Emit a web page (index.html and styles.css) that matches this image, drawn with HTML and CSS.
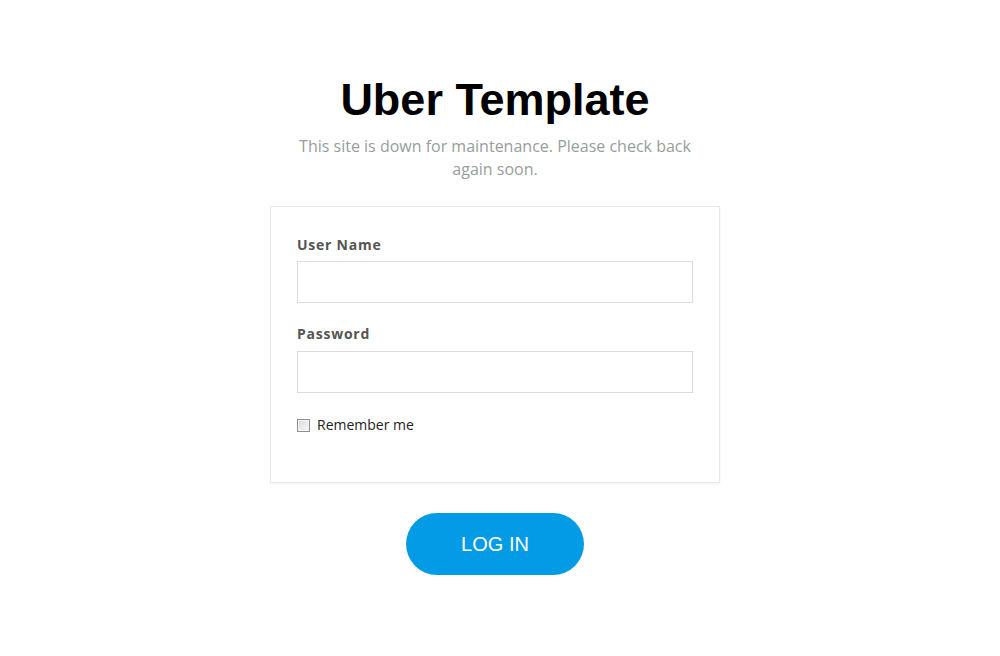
FILE: index.html
```html
<!DOCTYPE html>
<html lang="en">
<head>
    <meta charset="UTF-8">
    <meta name="viewport" content="width=device-width, initial-scale=1.0">
    <title>Uber Template</title>
    <link rel="stylesheet" href="styles.css">
</head>
<body>
    <div class="wrapper">
        <h1>Uber Template</h1>
        <p class="intro">This site is down for maintenance. Please check back again soon.</p>

        <form class="login-form" onsubmit="return false;">
            <div class="login-box">
                <label for="username" class="field-label">User Name</label>
                <input type="text" id="username" class="field-input">

                <label for="password" class="field-label field-label-pass">Password</label>
                <input type="password" id="password" class="field-input">

                <label class="remember">
                    <input type="checkbox" class="remember-check">
                    <span>Remember me</span>
                </label>
            </div>
            <button type="submit" class="login-btn">LOG IN</button>
        </form>
    </div>
</body>
</html>
```

FILE: styles.css
```css
body {
    margin: 0;
    padding: 75px 10px 0 0;
    background-color: #fff;
    font-family: 'Open Sans', sans-serif;
    color: #333;
}
.wrapper {
    width: 450px;
    margin: 0 auto;
    text-align: center;
}
h1 {
    font-family: 'Liberation Sans', Arial, sans-serif;
    font-size: 45px;
    font-weight: 700;
    line-height: 50px;
    color: #000;
    margin: 0 0 10px;
}
.intro {
    width: 410px;
    margin: 0 auto 25px;
    font-size: 16px;
    line-height: 23px;
    color: #979d9d;
}
.login-box {
    text-align: left;
    border: 1px solid #e8e8e8;
    box-shadow: 0 1px 2px rgba(0,0,0,0.06);
    padding: 28px 26px 47px;
}
.field-label {
    display: block;
    font-size: 14px;
    font-weight: 700;
    line-height: 20px;
    color: #555;
    letter-spacing: 0.75px;
    margin-bottom: 6px;
}
.field-label-pass {
    margin-bottom: 7px;
}
.field-input {
    display: block;
    box-sizing: border-box;
    width: 100%;
    height: 42px;
    margin: 0 0 21px;
    border: 1px solid #dcdcdc;
    padding: 0 10px;
    font-family: 'Open Sans', sans-serif;
    font-size: 14px;
    outline: none;
}
.remember {
    display: flex;
    align-items: center;
    font-size: 14px;
    line-height: 20px;
    color: #222;
    margin-top: 22px;
}
.remember-check {
    appearance: none;
    -webkit-appearance: none;
    box-sizing: border-box;
    width: 13px;
    height: 13px;
    margin: 0 7px 0 0;
    border: 1px solid #8e8f8f;
    background: linear-gradient(135deg, #dcdcdc, #f6f6f6);
    box-shadow: inset 0 0 0 1px #f4f4f4;
}
.login-btn {
    display: block;
    width: 178px;
    height: 62px;
    margin: 30px auto 0;
    border: none;
    border-radius: 31px;
    background-color: #039be5;
    color: #fff;
    font-family: 'Liberation Sans', Arial, sans-serif;
    font-size: 20px;
    cursor: pointer;
}
```
